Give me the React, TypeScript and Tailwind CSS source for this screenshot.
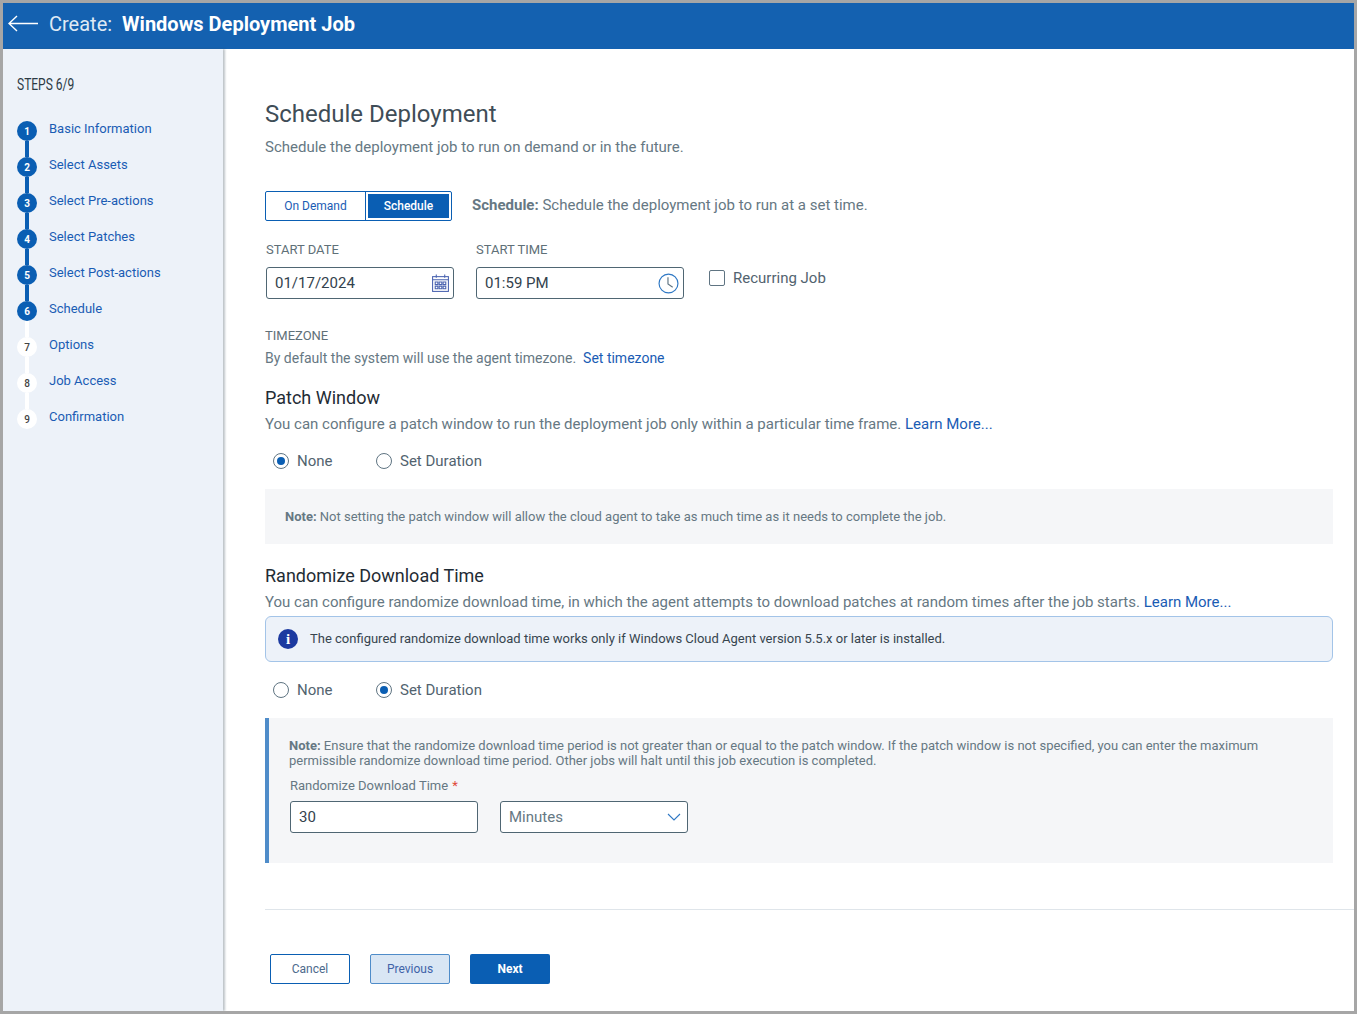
const steps = ["Basic Information", "Select Assets", "Select Pre-actions", "Select Patches", "Select Post-actions", "Schedule", "Options", "Job Access", "Confirmation"];

const Step = ({ n, label }: { n: number; label: string }) => {
  const done = n <= 6;
  return (
    <div className="flex h-[36px]">
      <div className="flex w-[20px] flex-col items-center">
        <div className={done ? "flex h-[20px] w-[20px] shrink-0 items-center justify-center rounded-full bg-[#0a5eb3] pt-[1px] text-[10px] leading-none font-bold text-white" : "flex h-[20px] w-[20px] shrink-0 items-center justify-center rounded-full bg-white pt-[1px] text-[10px] leading-none font-medium text-[#444]"}>
          {n}
        </div>
        {n < 9 && <div className={n < 6 ? "h-[16px] w-[4px] bg-[#0a5eb3]" : "h-[16px] w-[4px] bg-white"} />}
      </div>
      <span className="ml-[12px] text-[13px] leading-[16px] text-[#1a5cb4]">{label}</span>
    </div>
  );
};

const Radio = ({ label, on }: { label: string; on?: boolean }) => (
  <div className="flex items-center gap-[8px]">
    <span className="flex h-[16px] w-[16px] items-center justify-center rounded-full border border-[#5f7482] bg-white">
      {on && <span className="h-[8px] w-[8px] rounded-full bg-[#0a5eb3]" />}
    </span>
    <span className="text-[15px] leading-[20px] text-[#52636f]">{label}</span>
  </div>
);

const CalendarIcon = () => (
  <svg width="19" height="19" viewBox="0 0 18 18" fill="none" stroke="#4a63b0" strokeWidth="1">
    <rect x="1.5" y="2.5" width="15" height="14" />
    <path d="M1.5 5.5h15M5 0.5v3M13 0.5v3" />
    <path d="M4 7.5h2.5v2.5H4zM7.75 7.5h2.5v2.5h-2.5zM11.5 7.5H14v2.5h-2.5zM4 11.5h2.5V14H4zM7.75 11.5h2.5V14h-2.5zM11.5 11.5H14V14h-2.5z" />
  </svg>
);

const ClockIcon = () => (
  <svg width="21" height="21" viewBox="0 0 20 20" fill="none" stroke="#2f78c4" strokeWidth="1.1">
    <circle cx="10" cy="10" r="9" />
    <path d="M9.5 4v6.5l4.5 3" stroke="#5f7482" />
  </svg>
);

const App = () => (
  <div className="flex h-[1014px] w-[1357px] flex-col overflow-hidden border-[3px] border-[#a6a6a6] bg-white font-['Roboto',sans-serif]">
    <header className="flex h-[46px] shrink-0 items-center bg-[#1461b0] pb-[4px]">
      <svg className="ml-[5px] mb-[1px]" width="31" height="18" viewBox="0 0 31 18" fill="none" stroke="white" strokeWidth="1.4">
        <path d="M30 8.5H1M9 1L1 8.5L9 16" />
      </svg>
      <span className="ml-[10px] text-[20px] leading-[26px] text-[#dfe9f4]">Create:</span>
      <span className="ml-[10px] text-[20px] leading-[26px] font-bold text-white">Windows Deployment Job</span>
    </header>

    <div className="flex min-h-0 flex-1">
      <aside className="w-[220px] shrink-0 bg-[#edf2f9] pt-[24px] pl-[14px] shadow-[2px_0_2px_rgba(70,85,100,0.35)]">
        <div className="h-[24px] origin-left scale-x-[0.75] text-[16px] leading-[24px] whitespace-nowrap text-[#2c3a44]">STEPS 6/9</div>
        <div className="mt-[24px]">
          {steps.map((s, i) => (
            <Step key={s} n={i + 1} label={s} />
          ))}
        </div>
      </aside>

      <main className="min-w-0 flex-1 pt-[50px] pr-[21px] pl-[42px]">
        <h1 className="text-[24px] leading-[30px] font-normal text-[#3f4d57]">Schedule Deployment</h1>
        <p className="mt-[8px] text-[15px] leading-[20px] text-[#667883]">Schedule the deployment job to run on demand or in the future.</p>

        <div className="mt-[34px] flex h-[30px] items-center">
          <div className="flex h-[30px] w-[187px] rounded-[2px] border border-[#0a5eb3]">
            <div className="flex w-[100px] items-center justify-center border-r border-[#0a5eb3] text-[12px] text-[#1a5cb4]">On Demand</div>
            <div className="flex-1 p-[2px]">
              <div className="flex h-full items-center justify-center bg-[#0a5eb3] text-[12px] font-medium text-white">Schedule</div>
            </div>
          </div>
          <p className="ml-[20px] pb-[2px] text-[15px] leading-[20px] text-[#667883]">
            <b className="font-bold">Schedule:</b> Schedule the deployment job to run at a set time.
          </p>
        </div>

        <div className="mt-[21px] flex">
          <div className="ml-[1px] w-[188px]">
            <div className="text-[13px] leading-[16px] text-[#5f7078]">START DATE</div>
            <div className="mt-[9px] flex h-[32px] items-center justify-between rounded-[3px] border border-[#4f6673] pr-[3px] pl-[8px] text-[15px] text-[#33424d]">
              <span className="pt-[1px]">01/17/2024</span>
              <CalendarIcon />
            </div>
          </div>
          <div className="ml-[22px] w-[208px]">
            <div className="text-[13px] leading-[16px] text-[#5f7078]">START TIME</div>
            <div className="mt-[9px] flex h-[32px] items-center justify-between rounded-[3px] border border-[#4f6673] pr-[4px] pl-[8px] text-[15px] text-[#33424d]">
              <span className="pt-[1px]">01:59 PM</span>
              <ClockIcon />
            </div>
          </div>
          <div className="mt-[26px] ml-[25px] flex h-[20px] items-center gap-[8px]">
            <span className="h-[16px] w-[16px] rounded-[2px] border border-[#5f7482] bg-white" />
            <span className="text-[15px] leading-[20px] text-[#52636f]">Recurring Job</span>
          </div>
        </div>

        <div className="mt-[29px] text-[13px] leading-[16px] text-[#5f7078]">TIMEZONE</div>
        <p className="mt-[5px] text-[14px] leading-[18px] text-[#667883]">
          By default the system will use the agent timezone.
          <span className="ml-[7px] text-[#1a5cb4]">Set timezone</span>
        </p>

        <h2 className="mt-[19px] text-[18px] leading-[24px] font-normal text-[#1f2c35]">Patch Window</h2>
        <p className="mt-[4px] text-[15px] leading-[20px] text-[#667883]">
          You can configure a patch window to run the deployment job only within a particular time frame. <span className="text-[#1a5cb4]">Learn More...</span>
        </p>
        <div className="mt-[17px] ml-[8px] flex gap-[43.5px]">
          <Radio label="None" on />
          <Radio label="Set Duration" />
        </div>
        <div className="mt-[18px] flex h-[55px] items-center bg-[#f5f6f8] pt-[1px] pl-[20px] text-[13px] text-[#667883]">
          <p>
            <b className="font-bold">Note:</b> Not setting the patch window will allow the cloud agent to take as much time as it needs to complete the job.
          </p>
        </div>

        <h2 className="mt-[20px] text-[18px] leading-[24px] font-normal text-[#1f2c35]">Randomize Download Time</h2>
        <p className="mt-[4px] text-[15px] leading-[20px] whitespace-nowrap text-[#667883]">
          You can configure randomize download time, in which the agent attempts to download patches at random times after the job starts. <span className="text-[#1a5cb4]">Learn More...</span>
        </p>
        <div className="mt-[4px] flex h-[46px] items-center rounded-[6px] border border-[#a3c4e8] bg-[#edf2f9] pl-[12px]">
          <span className="flex h-[20px] w-[20px] items-center justify-center rounded-full bg-[#1c3aa0] font-['Liberation_Serif',serif] text-[15px] leading-none font-bold text-white">i</span>
          <span className="ml-[12px] text-[13px] text-[#37454f]">The configured randomize download time works only if Windows Cloud Agent version 5.5.x or later is installed.</span>
        </div>
        <div className="mt-[18px] ml-[8px] flex gap-[43.5px]">
          <Radio label="None" />
          <Radio label="Set Duration" on />
        </div>

        <div className="mt-[18px] h-[145px] border-l-4 border-[#4f8cc9] bg-[#f5f6f8] pt-[20px] pl-[20px]">
          <p className="w-[1000px] text-[13px] leading-[15px] text-[#667883]">
            <b className="font-bold">Note:</b> Ensure that the randomize download time period is not greater than or equal to the patch window. If the patch window is not specified, you can enter the maximum permissible randomize download time period. Other jobs will halt until this job execution is completed.
          </p>
          <div className="mt-[10px] ml-[1px] text-[13px] leading-[16px] text-[#667883]">
            Randomize Download Time <span className="ml-[1px] text-[#e0483a]">*</span>
          </div>
          <div className="mt-[7px] ml-[1px] flex gap-[22px]">
            <div className="flex h-[32px] w-[188px] items-center rounded-[3px] border border-[#4f6673] bg-white pt-[1px] pl-[8px] text-[15px] text-[#33424d]">30</div>
            <div className="flex h-[32px] w-[188px] items-center justify-between rounded-[3px] border border-[#4f6673] bg-white pr-[6px] pl-[8px] text-[15px] text-[#667883]">
              <span>Minutes</span>
              <svg width="14" height="8" viewBox="0 0 14 8" fill="none" stroke="#2f78c4" strokeWidth="1.1">
                <path d="M1 1l6 6 6-6" />
              </svg>
            </div>
          </div>
        </div>

        <div className="mt-[46px] -mr-[21px] h-px bg-[#dfe5ea]" />

        <div className="mt-[44px] ml-[5px] flex gap-[20px]">
          <button className="flex h-[30px] w-[80px] items-center justify-center rounded-[2px] border border-[#0a5eb3] bg-white text-[12px] text-[#4d6a8c]">Cancel</button>
          <button className="flex h-[30px] w-[80px] items-center justify-center rounded-[2px] border border-[#4f8cc9] bg-[#d9e6f4] text-[12px] text-[#3f63a8]">Previous</button>
          <button className="flex h-[30px] w-[80px] items-center justify-center rounded-[2px] bg-[#0a5eb3] text-[12px] font-bold text-white">Next</button>
        </div>
      </main>
    </div>
  </div>
);

export default App;
